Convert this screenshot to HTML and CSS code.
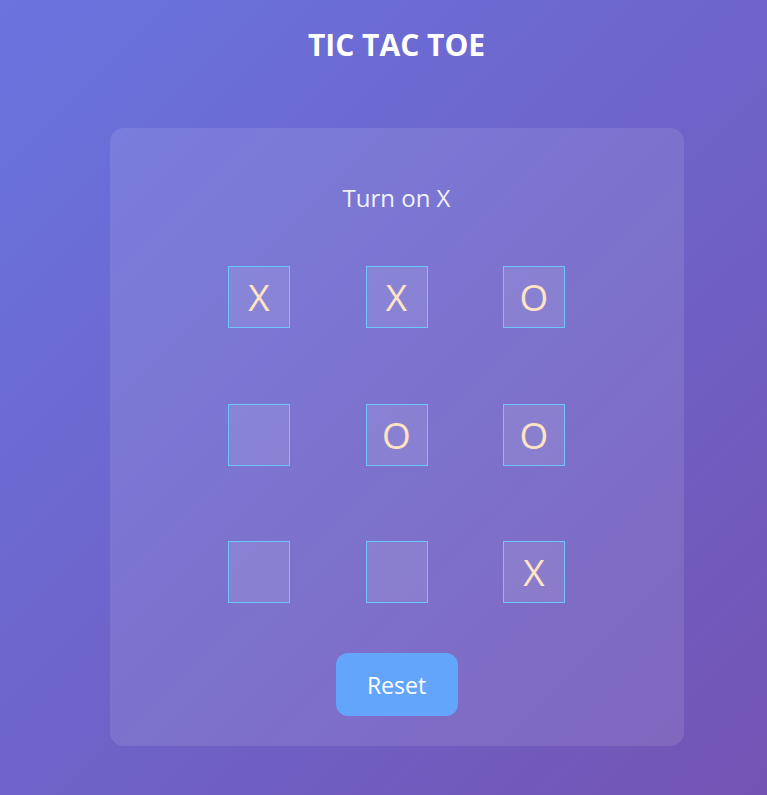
FILE: index.html
```html
<!DOCTYPE html>
<html lang="en">
<head>
<meta charset="utf-8">
<title>Tic Tac Toe</title>
<link rel="stylesheet" href="styles.css">
</head>
<body>
  <h1 class="title">TIC TAC TOE</h1>
  <main class="card">
    <p class="turn">Turn on X</p>
    <div class="board">
      <button class="cell">X</button>
      <button class="cell">X</button>
      <button class="cell">O</button>
      <button class="cell"></button>
      <button class="cell">O</button>
      <button class="cell">O</button>
      <button class="cell"></button>
      <button class="cell"></button>
      <button class="cell">X</button>
    </div>
    <button class="reset">Reset</button>
  </main>
</body>
</html>
```

FILE: styles.css
```css
html, body {
  margin: 0;
  padding: 0;
}
body {
  box-sizing: border-box;
  min-height: 100vh;
  padding-left: 26px;
  background: linear-gradient(135deg, #6974df 0%, #7354b4 100%);
  font-family: "Open Sans", "Noto Sans", sans-serif;
  color: #fff;
  display: flex;
  flex-direction: column;
  align-items: center;
}
.title {
  margin: 25px 0 0;
  font-size: 30px;
  line-height: 40px;
  font-weight: 700;
  color: #fff;
}
.card {
  margin-top: 63px;
  width: 574px;
  box-sizing: border-box;
  padding: 50px 0 30px;
  border-radius: 14px;
  background: rgba(255, 255, 255, 0.1);
  display: flex;
  flex-direction: column;
  align-items: center;
}
.turn {
  margin: 0;
  font-size: 24px;
  line-height: 40px;
  color: rgba(255, 255, 255, 0.92);
}
.board {
  margin-top: 48px;
  display: grid;
  grid-template-columns: repeat(3, 62px);
  grid-template-rows: repeat(3, 62px);
  gap: 75.5px;
}
.cell {
  width: 62px;
  height: 62px;
  box-sizing: border-box;
  padding: 0;
  border: 1px solid #6ec6ff;
  background: rgba(255, 255, 255, 0.1);
  color: #ffe4c4;
  font-family: "Open Sans", "Noto Sans", sans-serif;
  font-size: 37px;
  font-weight: 400;
  line-height: 60px;
  text-align: center;
}
.reset {
  margin-top: 50px;
  width: 122px;
  height: 63px;
  border: none;
  border-radius: 12px;
  background: #62a5fa;
  color: #fff;
  font-family: "Open Sans", "Noto Sans", sans-serif;
  font-size: 23px;
  padding: 0;
}
```
